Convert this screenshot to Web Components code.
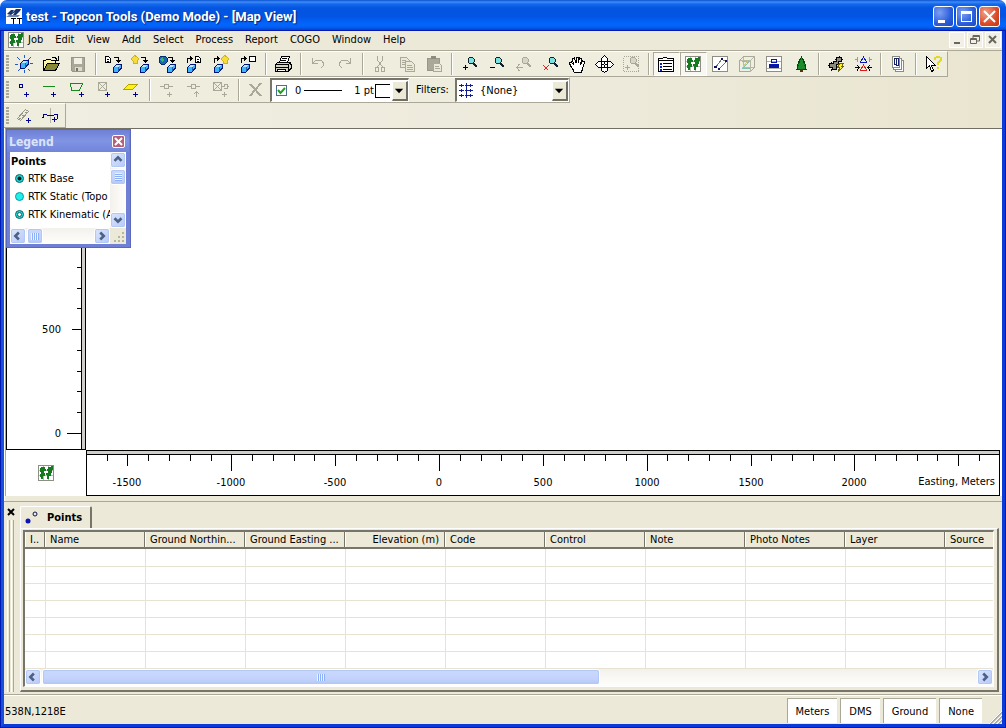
<!DOCTYPE html>
<html lang="en">
<head>
<meta charset="utf-8">
<title>test - Topcon Tools (Demo Mode) - [Map View]</title>
<style>
  html, body { margin: 0; height: 100%; background: #fff; }
  body { font: 11px/14px "DejaVu Sans Condensed", "DejaVu Sans", sans-serif; color: #000; }
</style>
</head>
<body>
<app-window></app-window>

<script>
const define = (name, html, setup) => customElements.define(name, class extends HTMLElement {
  constructor() {
    super();
    this.attachShadow({ mode: 'open' }).innerHTML = html;
  }
  connectedCallback() {
    if (setup && !this.ready) { this.ready = true; setup(this, this.shadowRoot); }
  }
});

/* ---------- icons, 20 x 20 grid ---------- */
const s = (d, c = '#000', w = 1) => `<path d="${d}" fill="none" stroke="${c}" stroke-width="${w}"/>`;
const f = (d, c = '#000', o = 'none') => `<path d="${d}" fill="${c}" stroke="${o}"/>`;
const cube = (x, y) => `<g transform="translate(${x} ${y})">${f('M.5 3.5l3-3h4.500v4l-3 3.500h-4.500z', '#3fb4f8', '#00157a')}${f('M1.500 3l2-2h4l-2 2z', '#b4ebff')}${s('M5.500 3v4', '#1c62c0')}</g>`;
const plus = (x, y, c = '#000090') => s(`M${x - 2} ${y}.5h5M${x}.5 ${y - 2}v5`, c);
const page = (x, y) => f(`M${x}.5 ${y}.5h3l2 2v4h-5z`, '#fff', '#000') + s(`M${x + 2} ${y + 3}.5h2M${x + 2} ${y + 5}.5h2`);
const hookDown = s('M11 3.500h4v3', '#000') + f('M13 6h5l-2.500 3z');
const hookUp = s('M3.500 9v-4.500h4', '#000') + f('M6 2v5l3-2.500z');
const shell = (x, y) => f(`M${x} ${y + 3}l2-2 2-1.500 2 1.500 2 2-2 2v2h-4v-2z`, '#f6dc3a', '#cdb02a');
const mag = (c, glass) => f('M10.500 3.500h3l1.500 1.500v3l-1.500 1.500h-3l-1.500-1.500v-3z', glass, c) + s('M14 9l4 4', c, 2);
const glassOn = mag('#102030', '#7be3df');
const glassOff = mag('#aaa899', '#d8d5c6');
const leaf = f('M5 4h4v2h1v2h-2v2h1v3h-2v3h-2v-2h-1v-3h1v-2h-1v-4h1zM12 4h3v-1h2v4h-1v3h-1v3h-2v3h-2v-4h-1v-2h2v-2h-1z', '#16791f');
const mapBox = f('M2.500 2.500h15v15h-15z', '#fff', '#8e8e86') + s('M3 7.500h14M3 12.500h14M7.500 3v14M12.500 3v14', '#b9bab0') + leaf;
const G = '#aaa899';
const icons = {
  job: s('M10.500 1v3M3 3l3 3M17 3l-3 3M1 10.500h3M16 9.500h3M4 17l2-2M16 17l-2-2M10.500 16v3', '#2158c8') + cube(6, 6),
  open: f('M2.500 16.500v-10h2l1-1h4l1 1h4v3', '#fff7a8', '#000') + f('M2.500 16.500l4-7h12l-4 7z', '#8a8a35', '#000') + s('M11 3.500h3l2 2M17.500 2v4h-4'),
  save: f('M3.500 3.500h13v14h-12l-1-1z', G, '#99968a') + f('M6 4h8v6h-8z', '#f2f0e4') + f('M7 13h7v4h-7z', '#dedbcd') + f('M8 14h2v3h-2z', '#77756a'),
  impFile: page(2, 2) + hookDown + cube(10, 10),
  impShell: shell(1, 2) + hookDown + cube(10, 10),
  impWeb: f('M4 2h4l2 2v4l-2 2h-4l-2-2v-4z', '#1768b3', '#052a72') + f('M3 5l3-2 1 3-2 2z', '#3db65a') + hookDown + cube(10, 10),
  expFile: page(11, 2) + hookUp + cube(3, 10),
  expShell: shell(10, 2) + hookUp + cube(3, 10),
  expBox: f('M11.500 2.500h6v5h-6z', '#fff', '#000') + hookUp + cube(3, 10),
  print: f('M6.500 8.500l2-6h8l-2 6z', '#fff', '#000') + s('M9 4.500h5M8 6.500h5') + f('M2.500 10.500l2-2h12l1.500 2v4l-3 3h-12z', '#d6d3c3', '#000') + s('M3 10.500h12v6M3 13.500h12M15 10.500l3-2') + f('M4.500 15.500h8v2h-8z', '#fff', '#000'),
  undo: s('M4.500 4v5.500h5M5 9l3-3h5l2.500 3v2l-2 3', G),
  redo: s('M15.500 4v5.500h-5M15 9l-3-3h-5l-2.500 3v2l2 3', G),
  cut: s('M7.500 2v4l5 7M12.500 2v4l-5 7', G) + s('M5.500 13.500h3v4h-3zM11.500 13.500h3v4h-3z', G),
  copy: f('M3.500 3.500h6l3 3v7h-9z', '#ece9d8', G) + s('M5 6.500h4M5 8.500h5M5 10.500h5', G) + f('M8.500 7.500h6l3 3v7h-9z', '#ece9d8', G) + s('M10 11.500h5M10 13.500h6M10 15.500h6', G),
  paste: f('M3.500 4.500h12v12h-12z', G, '#99968a') + f('M7 2h5v3h-5z', '#8e8b7d') + f('M9.500 9.500h6l2 2v6h-8z', '#ece9d8', G) + s('M11 12.500h4M11 14.500h5', G),
  zoomIn: glassOn + plus(6, 13, '#000'),
  zoomOut: glassOn + s('M4 13.500h5'),
  zoomBack: glassOff + s('M3 13.500h7M6.500 10l-3 3.500 3 3.500', G),
  zoomX: glassOn + s('M3.500 11.500l5 5M8.500 11.500l-5 5', '#e0242a'),
  hand: f('M6.500 18v-2l-3-4-1-3 2-1 2 3-1-6 2-1 1.500 5v-6h2v6l1.500-5 2 1-1 6 2-4 2 1-2 7-1 3v1z', '#fff', '#000'),
  pan: f('M7.500 4.500l3-3 3 3v3h-6zM7.500 16.500l3 2 3-2v-3h-6zM4.500 7.500l-3 3 3 3h3v-6zM16.500 7.500l3 3-3 3h-3v-6z', '#fff', '#000') + f('M8 8h5v5h-5z', '#fff') + s('M10.500 7v3M10.500 11v3M7 10.500h3M11 10.500h3'),
  zoomSel: `<path d="M2.500 2.500h15v15h-15z" fill="none" stroke="${G}" stroke-dasharray="1 1"/>` + mag(G, '#d8d5c6') + plus(6, 13, G),
  list: f('M2.500 4.500h4l1-1h3l1 1h6v13h-15z', '#fff', '#000') + s('M3 6.500h14M7 9.500h9M7 12.500h9M7 15.500h9') + s('M4 10h2M4 13h2M4 16h2', '#0e1fae', 2),
  map: mapBox,
  network: f('M2.500 2.500h15v15h-15z', '#fff', '#8e8e86') + s('M5.500 13.500l6-8M12.500 5.500l3 2M15.500 8.500l-7 7', '#777') + f('M4 12h3v2h-3zM11 4h2v2h-2zM15 6h2v2h-2zM8 14h2v2h-2z', '#0a125e'),
  cad: f('M2.500 6.500l4-4h11v11l-4 4h-11z', '#f0eee0', '#a9aa96') + s('M2.500 6.500h11v11M13.500 6.500l4-4M6.500 2.500v11M7 13.500h10', '#b8b9a5') + s('M5 7.500h7l-6 7h7', '#84bfb4') + s('M5 14l6-7', '#d4cd72'),
  section: f('M2.500 2.500h15v15h-15z', '#fff', '#8e8e86') + s('M3 7.500h14M3 14.500h14', '#b0b0a8') + f('M5 10h10v4h-10z', '#0717a5') + s('M7.500 5.500h5v3h-5z', '#0717a5'),
  tree: f('M10.500 3l2.500 4h-1l2.500 4h-1l1.500 4h-9l1.500-4h-1l2.500-4h-1z', '#1d8b2c', '#05460f') + f('M9 15h3v3h-3z', '#543512'),
  compute: f('M3.500 9.500h4v-2h3v-4h5v4h-3v3h-2v5h-4v-2h-3z', '#8b8b7e', '#000') + s('M5.500 7.500v2M2 11.500h2M8.500 5.500h2M13.500 2v2M15 5.500h2M5.500 15v2M9 15.500h2') + f('M13.500 9.500h4l-2 3h2l-5 5 1-4h-2z', '#fff22d', '#6d6500'),
  adjust: s('M2 5.500h3M4.500 3v5M19 5.500h-3M16.500 3v5', '#999') + s('M10.500 3l-3 5h6z', '#0817c2') + s('M2 13.500h4M4 11l2 2.500-2 3M19 13.500h-4M17 11l-2 2.500 2 3', '#000') + s('M10.500 11l-3 5h6z', '#e01818'),
  report: f('M7.500 6.500h8v11h-8z', '#fff', '#8b8b80') + f('M5.500 4.500h8v11h-8z', '#fff', '#8b8b80') + f('M4.500 2.500h7v11h-7z', '#fff', '#8b8b80') + s('M8.500 5v5h-2v-6h4v7h-3', '#122068'),
  help: f('M3.500 2.500v12l3-3 2 6 2-1-2-5h4z', '#fff', '#000') + s('M12 6v-2l2-1h2l2 1v2l-3 3v2M14 14h2', '#e2dc18', 2),
  point: s('M5.500 4.500h3v3h-3z', '#000090') + plus(12, 14),
  line: s('M2 6.500h12', '#168a1c') + plus(12, 14),
  area: s('M2.500 3.500h12l-3 7h-8z', '#168a1c') + plus(13, 14),
  raster: s('M3.500 2.500h8v8h-8zM3 2l9 9M12 2l-9 9', G) + plus(12, 14),
  plane: f('M2 9l5-5h9l-5 5z', '#fff21a', '#b1a400') + plus(13, 14),
  pline: s('M3 6.500h4M12 6.500h4M7.500 4.500h4v4h-4z', G) + plus(12, 14, G),
  pup: s('M3 6.500h4M12 6.500h4M7.500 4.500h4v4h-4z', G) + s('M12.500 17v-5M10 14l2.500-2.500 2.500 2.500', G),
  parea: s('M2.500 2.500h8v8h-8zM2 2l9 9M11 2l-9 9M10 6.500h3v-2h3v4h-3M16 6.500h2', G) + plus(13, 14, G),
  del: s('M4 4l11 12M15 3l-11 13', G, 2),
  road: s('M3.500 12.500l8-9 3 2-8 9zM5 12l2 1M8 9l2 1M11 6l2 1', '#99968a') + plus(14, 14),
  xsec: s('M9.500 2v15', '#b5b3a5') + s('M2.500 12v-3.500h3M6 9.500h7M13 8.500h3v4M3 11.500h-2', '#000090') + plus(13, 13),
  filter: s('M1 4.500h14M1 9.500h14M1 14.500h14M3.500 3v3M8.500 2v15M12.500 3v3M3.500 8v3M12.500 8v3M3.500 13v3M12.500 13v3', '#101e90') + s('M6.500 1v17', '#fff')
};
define('ui-icon', `<style>:host{display:block;width:20px;height:20px}svg{display:block;width:100%;height:100%}</style><svg viewBox="0 0 20 20" shape-rendering="crispEdges" aria-hidden="true"></svg>`,
  (el, r) => { r.querySelector('svg').innerHTML = icons[el.getAttribute('name')] || ''; });

/* ---------- title bar ---------- */
define('title-bar', `
<style>
  :host { display: flex; align-items: center; height: 30px; flex: none; padding: 0 6px 0 6px; box-sizing: border-box; gap: 4px;
    border-radius: 7px 7px 0 0;
    background: linear-gradient(#0a4fd0 0, #3f8cf7 2px, #1668ee 4px, #0455e0 8px, #0254e3 16px, #0365fc 24px, #0361f6 27px, #0344c4 30px); }
  h1 { margin: 0; flex: 1; color: #fff; font: bold 13px/18px Roboto, "Open Sans", sans-serif; text-shadow: 1px 1px 1px #07207a; padding-top: 4px; white-space: nowrap; overflow: hidden; }
  .logo { width: 16px; height: 16px; margin-top: 2px; }
  .keys { display: flex; gap: 2px; margin-top: 2px; }
  button { width: 21px; height: 21px; padding: 0; border: 1px solid #fff; border-radius: 3px; background: radial-gradient(circle at 30% 30%, #7ea0f2, #2b5ddb 60%, #1b49c4); }
  button.close { background: radial-gradient(circle at 30% 30%, #f0a088, #dc4a26 60%, #b93a16); }
  svg { display: block; }
</style>
<svg class="logo" viewBox="0 0 16 16" aria-hidden="true"><path fill="#fff" d="M0 0h16v16H0z"/><path fill="#17336f" d="M1 6l4-4h3L6 5l4-4h5l-1 2-4 4H7l2-3-4 3z"/><path fill="#6d82ad" d="M0 9l3-2h11l-2 2z"/><path fill="#000" d="M5 10h5v1H8v5H7v-5H5zM11 10h5v1h-2v5h-1v-5h-2z"/></svg>
<h1><slot></slot></h1>
<div class="keys">
  <button aria-label="Minimize"><svg viewBox="0 0 19 19"><path fill="#fff" d="M4 13h7v3H4z"/></svg></button>
  <button aria-label="Maximize"><svg viewBox="0 0 19 19"><path fill="#fff" fill-rule="evenodd" d="M4 4h11v11H4zM5 7v7h9V7z"/></svg></button>
  <button class="close" aria-label="Close"><svg viewBox="0 0 19 19"><path stroke="#fff" stroke-width="2" d="M4 4l11 11M15 4L4 15"/></svg></button>
</div>`);

/* ---------- menu bar ---------- */
define('menu-bar', `
<style>
  :host { display: flex; align-items: center; height: 20px; flex: none; padding: 0 1px 0 2px; border-bottom: 1px solid #aca899; background: #ece9d8; }
  nav { display: flex; flex: 1; margin-left: -4px; }
  nav button { font: inherit; color: inherit; border: 0; background: none; padding: 1px 6px; white-space: nowrap; }
  .mdi { display: flex; gap: 2px; }
  .mdi button { width: 16px; height: 16px; padding: 0; border: 1px solid #fff; background: #f1efe6; }
  svg { display: block; }
</style>
<ui-icon name="map"></ui-icon><nav></nav>
<div class="mdi">
  <button aria-label="Minimize view"><svg viewBox="0 0 14 14"><path fill="#69675c" d="M4 9h6v2H4z"/></svg></button>
  <button aria-label="Restore view"><svg viewBox="0 0 14 14"><path fill="none" stroke="#69675c" d="M5 5V2.500h6.500V8H9M2.500 5.500h6v5h-6zM3 6.500h6M5 3.500h6"/></svg></button>
  <button aria-label="Close view"><svg viewBox="0 0 14 14"><path stroke="#69675c" stroke-width="2" d="M3 3l7 7M10 3l-7 7"/></svg></button>
</div>`, (el, r) => {
  r.querySelector('nav').innerHTML = el.getAttribute('items').split(',').map(t => `<button>${t}</button>`).join('');
});

/* ---------- toolbars ---------- */
define('tool-bar', `
<style>
  :host { display: flex; align-items: stretch; width: max-content; height: 24px; border: solid; border-width: 1px 1px 1px 0; border-color: #fff #aca899 #aca899; background: #efedde; }
  .grip { width: 3px; margin: 3px 2px 3px 2px; background: repeating-linear-gradient(#aca899 0 2px, transparent 2px 3px); }
</style>
<div class="grip"></div><slot></slot>`);
define('tool-sep', `<style>:host{display:block;width:1px;margin:1px 3px 1px 3px;background:#aca899;border-right:1px solid #fff}</style>`);
define('tool-button', `
<style>
  :host { display: block; }
  button { display: flex; align-items: center; justify-content: flex-start; width: 27px; height: 24px; padding: 0 0 0 2px; border: 1px solid transparent; background: none; }
  :host([pressed]) button { border-color: #aca899 #fff #fff #aca899; background: #f8f7f1; }
</style>
<button></button>`, (el, r) => {
  const b = r.querySelector('button');
  b.innerHTML = `<ui-icon name="${el.getAttribute('icon')}"></ui-icon>`;
  b.setAttribute('aria-label', el.getAttribute('label'));
});
const arrowKey = `<svg viewBox="0 0 14 18"><path d="M2 7h9l-4.500 5z"/></svg>`;
const comboCss = `
  .box { display: flex; align-items: center; height: 24px; box-sizing: border-box; border: solid; border-width: 2px 1px 1px 2px; border-color: #77756a #fff #fff #77756a; background: #fff; outline: 0; }
  .key { flex: none; width: 16px; height: 20px; padding: 0; box-sizing: border-box; border: 1px solid; border-color: #fff #716f64 #716f64 #fff; border-right-width: 2px; border-bottom-width: 2px; background: #ece9d8; }
  .key svg { display: block; width: 100%; height: 100%; }`;
define('style-picker', `
<style>
  :host { display: block; }
  ${comboCss}
  .box { width: 139px; }
  .tick { position: relative; display: block; width: 11px; height: 11px; margin: 0 8px 0 4px; }
  .tick svg { position: absolute; inset: 0; width: 11px; height: 11px; pointer-events: none; }
  input { appearance: none; display: block; width: 11px; height: 11px; margin: 0; border: 1px solid #4d6f8a; box-sizing: border-box; background: #fff; }
  .stroke { width: 38px; height: 1px; background: #000; margin: 0 12px 0 3px; }
  .swatch { width: 14px; height: 12px; border: 1px solid; border-right: 0; margin-left: 1px; }
  label { display: contents; }
  .key { margin-left: auto; }
</style>
<div class="box"><label><span class="tick"><input type="checkbox" checked><svg viewBox="0 0 11 11"><path d="M2 5l2.500 3L9 3" fill="none" stroke="#21a121" stroke-width="2"/></svg></span><span>0</span></label><span class="stroke"></span><span>1 pt</span><span class="swatch"></span><button class="key" aria-label="Choose style">${arrowKey}</button></div>`);
define('filter-picker', `
<style>
  :host { display: flex; align-items: center; }
  ${comboCss}
  label { width: 31px; padding: 0 8px 0 7px; }
  .box { width: 114px; padding-left: 1px; }
  select { appearance: none; flex: 1; min-width: 0; border: 0; padding: 0 0 0 2px; background: none; font: inherit; color: inherit; outline: 0; height: 18px; }
  .key { pointer-events: none; }
</style>
<label for="f">Filters:</label><div class="box"><ui-icon name="filter"></ui-icon><select id="f"><option>{None}</option></select><span class="key">${arrowKey}</span></div>`);

/* ---------- rulers ---------- */
const unit = 20.77;
define('ruler-x', `
<style>
  :host { display: flex; position: relative; overflow: hidden; box-sizing: border-box; border: 1px solid #000; background: linear-gradient(#d0ceca 3px, #000 3px 4px, #fff 4px); }
  svg { flex: none; width: 2400px; height: 100%; font: inherit; }
  span { position: absolute; right: 4px; top: 24px; }
</style><svg aria-label="Easting ruler"></svg><span>Easting, Meters</span>`, (el, r) => {
  let out = '';
  for (let n = -16; n <= 26; n++) {
    const x = Math.round(352 + n * unit), len = n % 10 === 0 ? 16 : n % 5 === 0 ? 11 : 6;
    out += `<rect x="${x}" y="4" width="1" height="${len}"/>`;
    if (n % 5 === 0 && n < 25) out += `<text x="${x}" y="35" text-anchor="middle">${n * 100}</text>`;
  }
  r.querySelector('svg').innerHTML = out;
});
define('ruler-y', `
<style>
  :host { display: flex; align-items: flex-end; overflow: hidden; box-sizing: border-box; border-left: 1px solid #000; border-bottom: 1px solid #000; background: #fff; }
  svg { flex: none; width: 74px; height: 100%; font: inherit; }
  .band { width: 3px; height: 100%; border: solid #000; border-width: 0 1px; background: #d0ceca; }
</style><svg aria-label="Northing ruler"></svg><div class="band"></div>`, (el, r) => {
  const svg = r.querySelector('svg'), paletteHeight = 120;
  const draw = () => {
    const h = el.clientHeight;
    let out = '';
    for (let n = 0; h - 17 - n * unit > paletteHeight; n++) {
      const y = Math.round(h - 16 - n * unit), len = n % 10 === 0 ? 14 : n % 5 === 0 ? 9 : 4;
      out += `<rect x="${74 - len}" y="${y}" width="${len}" height="1"/>`;
      if (n % 5 === 0) out += `<text x="54" y="${y + 4}" text-anchor="end">${n * 100}</text>`;
    }
    svg.innerHTML = out;
  };
  draw();
  new ResizeObserver(draw).observe(el);
});

/* ---------- scroll bars ---------- */
const chev = { left: 'M9 4L5 8l4 4', right: 'M6 4l4 4-4 4', up: 'M4 9l4-4 4 4', down: 'M4 6l4 4 4-4' };
define('scroll-bar', `
<style>
  :host { display: flex; background: linear-gradient(#f3f1ec, #fefefb); box-sizing: border-box; }
  :host([vertical]) { flex-direction: column; background: linear-gradient(90deg, #f3f1ec, #fefefb); }
  button { flex: none; width: 16px; height: 16px; padding: 0; border: 1px solid #fff; border-radius: 3px; outline: 1px solid #b4c8f6; outline-offset: -2px; background: linear-gradient(135deg, #dbe5fe, #b6c9f7); }
  svg { display: block; width: 100%; height: 100%; }
  .track { flex: 1; display: flex; flex-direction: inherit; min-width: 0; min-height: 0; padding: 1px; }
  .thumb { display: flex; align-items: center; justify-content: center; flex: none; box-sizing: border-box; border: 1px solid #fff; border-radius: 3px; outline: 1px solid #b4c8f6; outline-offset: -2px; background: linear-gradient(#c9d8fc, #c3d3fd 60%, #b4c8f4); width: var(--thumb, 16px); height: 16px; margin: -1px 0; }
  .thumb i { width: 8px; height: 7px; background: repeating-linear-gradient(90deg, #eef4fe 0 1px, #8cb0f8 1px 2px); }
  :host([vertical]) .thumb { width: 16px; margin: 0 -1px; }
  :host([vertical]) .thumb i { width: 7px; height: 8px; background: repeating-linear-gradient(#eef4fe 0 1px, #8cb0f8 1px 2px); }
</style>
<button></button><div class="track"><div class="thumb"><i></i></div></div><button></button>`, (el, r) => {
  const names = el.hasAttribute('vertical') ? ['up', 'down'] : ['left', 'right'];
  r.querySelectorAll('button').forEach((b, i) => {
    b.setAttribute('aria-label', 'Scroll ' + names[i]);
    b.innerHTML = `<svg viewBox="0 0 16 16"><path fill="none" stroke="#4d6185" stroke-width="3" d="${chev[names[i]]}"/></svg>`;
  });
});

/* ---------- legend palette ---------- */
define('legend-panel', `
<style>
  :host { display: flex; flex-direction: column; box-sizing: border-box; width: 125px; height: 119px; padding: 0 4px 3px 3px; background: #6f7fd6; border: 1px solid #5a68bd; }
  header { display: flex; align-items: center; justify-content: space-between; height: 22px; margin: 0 -3px; padding: 0 4px 0 2px; flex: none; background: linear-gradient(#6f80d6, #8094e4 50%, #7184da); }
  h2 { margin: 0; padding-top: 2px; font: bold 12px/14px "DejaVu Sans Condensed", sans-serif; color: #dbe3fb; }
  header button { width: 13px; height: 13px; padding: 0; border: 1px solid #fff; border-radius: 2px; background: #b5607a; }
  svg { display: block; width: 100%; height: 100%; }
  .body { flex: 1; min-height: 0; display: grid; grid-template: 1fr 16px / 1fr 16px; background: #fff; }
  .list { white-space: nowrap; min-width: 0; }
  h3 { margin: 2px 0 0 1px; font: bold 11px/16px "DejaVu Sans Condensed", sans-serif; }
  ul { list-style: none; margin: 0; padding: 0; }
  li { display: flex; align-items: center; gap: 3px; height: 18px; padding-left: 4px; }
  li svg { width: 11px; height: 11px; flex: none; margin-bottom: 2px; }
  .corner { background: #ece9d8; }
</style>
<header><h2>Legend</h2><button aria-label="Close legend"><svg viewBox="0 0 11 11"><path stroke="#fff" stroke-width="2" d="M2 2l7 7M9 2L2 9"/></svg></button></header>
<div class="body">
  <div class="list"><h3>Points</h3><ul>
    <li><svg viewBox="0 0 11 11"><circle cx="5.500" cy="5.500" r="4" fill="#26d6d2" stroke="#046a6c"/><circle cx="5.500" cy="5.500" r="2" fill="#001b20"/></svg>RTK Base</li>
    <li><svg viewBox="0 0 11 11"><circle cx="5.500" cy="5.500" r="4" fill="#1df0ee" stroke="#0a9c9c"/></svg>RTK Static (Topo</li>
    <li><svg viewBox="0 0 11 11"><circle cx="5.500" cy="5.500" r="4" fill="#26d6d2" stroke="#046a6c"/><circle cx="5.500" cy="5.500" r="2" fill="#fff" stroke="#046a6c"/></svg>RTK Kinematic (A</li>
  </ul></div>
  <scroll-bar vertical></scroll-bar><scroll-bar></scroll-bar>
  <div class="corner"><svg viewBox="0 0 16 16"><path fill="#b8b4a2" d="M12 4h2v2h-2zM8 8h2v2H8zM12 8h2v2h-2zM4 12h2v2H4zM8 12h2v2H8zM12 12h2v2h-2z"/></svg></div>
</div>`);

/* ---------- map ---------- */
define('map-view', `
<style>
  :host { position: relative; display: grid; grid-template: 1fr 46px / 80px 1fr; flex: 1; min-height: 0; background: #fff; border-top: 1px solid #716f64; border-left: 1px solid #aca899; padding: 0 2px 0 0; margin-left: 1px; }
  .corner { display: grid; place-items: center; }
  legend-panel { position: absolute; left: 0; top: 0; }
</style>
<ruler-y></ruler-y><main></main><div class="corner"><ui-icon name="map"></ui-icon></div><ruler-x></ruler-x>
<legend-panel></legend-panel>`);

/* ---------- docked points table ---------- */
define('points-dock', `
<style>
  :host { display: grid; grid-template-columns: 16px 1fr; flex: none; height: 192px; border-top: 1px solid #aca899; margin-top: 5px; background: #ece9d8; padding-right: 3px; }
  .side { display: flex; flex-direction: column; padding: 6px 0 3px 3px; gap: 4px; }
  .side button { width: 8px; height: 8px; padding: 0; border: 0; background: none; }
  .side svg { display: block; }
  .grip { flex: 1; width: 7px; background: linear-gradient(90deg, #fff 1px, #ece9d8 1px 2px, #aca899 2px 3px, #ece9d8 3px 4px, #fff 4px 5px, #ece9d8 5px 6px, #aca899 6px); }
  .area { min-width: 0; display: flex; flex-direction: column; padding-bottom: 3px; }
  .tab { display: flex; align-items: center; gap: 6px; box-sizing: border-box; width: 72px; height: 22px; margin-top: 4px; padding: 0 4px; border: solid; border-width: 1px 2px 0 1px; border-color: #fff #77756a #fff #fff; border-radius: 2px 2px 0 0; font: inherit; font-weight: bold; color: inherit; background: #ece9d8; }
  .tab svg { width: 16px; height: 16px; flex: none; }
  .panel { flex: 1; min-height: 0; display: flex; flex-direction: column; border: solid; border-width: 1px 2px 2px 1px; border-color: #fff #77756a #77756a #fff; padding: 1px 3px 3px 2px; }
  .frame { flex: 1; min-height: 0; display: flex; flex-direction: column; overflow: hidden; border: solid; border-width: 2px 1px 1px 2px; border-color: #77756a #fff #fff #77756a; background: #fff; }
  .clip { flex: 1; min-height: 0; overflow: hidden; }
  table { border-collapse: separate; border-spacing: 0; table-layout: fixed; width: 1020px; }
  th { box-sizing: border-box; height: 17px; padding: 0 5px; font-weight: normal; text-align: left; line-height: 14px; white-space: nowrap; overflow: hidden; text-overflow: ellipsis; background: #ece9d8; border: solid; border-width: 0 1px 2px 0; border-color: #77756a; box-shadow: inset 1px 0 #fff; }
  th:first-child { padding-right: 0; text-overflow: clip; }
  th.num { text-align: right; }
  td { box-sizing: border-box; height: 17px; padding: 0; border: solid #e6e3d3; border-width: 0 0 1px 1px; }
  tbody tr:first-child td { height: 18px; }
  td:first-child { border-left: 0; }
  scroll-bar { height: 17px; --thumb: 558px; }
</style>
<div class="side"><button aria-label="Close panel"><svg viewBox="0 0 8 8"><path stroke="#000" stroke-width="2" d="M1 1l6 6M7 1L1 7"/></svg></button><div class="grip"></div></div>
<div class="area">
  <button class="tab"><svg viewBox="0 0 16 16"><circle cx="3" cy="11" r="2.500" fill="#0a14b4"/><circle cx="10" cy="4" r="2" fill="none" stroke="#0a1450"/></svg>Points</button>
  <div class="panel"><div class="frame">
    <div class="clip"><table><colgroup><col style="width:20px"></colgroup><thead><tr></tr></thead><tbody></tbody></table></div>
    <scroll-bar></scroll-bar>
  </div></div>
</div>`, (el, r) => {
  const heads = ['I..', 'Name', 'Ground Northin...', 'Ground Easting ...', 'Elevation (m)', 'Code', 'Control', 'Note', 'Photo Notes', 'Layer', 'Source'];
  r.querySelector('tr').innerHTML = heads.map(h => `<th scope="col"${h === 'Elevation (m)' ? ' class="num"' : ''}>${h}</th>`).join('');
  r.querySelector('tbody').innerHTML = ('<tr>' + '<td></td>'.repeat(heads.length) + '</tr>').repeat(7);
});

/* ---------- status bar ---------- */
define('status-bar', `
<style>
  :host { display: flex; align-items: stretch; flex: none; height: 29px; border-top: 1px solid #aca899; box-shadow: inset 0 1px #fff; background: #ece9d8; }
  .pos { flex: 1; align-self: center; padding: 4px 0 0 1px; }
  .pane { box-sizing: border-box; margin: 3px 3px 1px 0; padding: 6px 8px 0 8px; border: solid #aca899; border-width: 1px 0 0 1px; background: #fff; }
  svg { align-self: flex-end; width: 14px; height: 14px; margin-left: 3px; }
</style>
<div class="pos">538N,1218E</div><div class="pane">Meters</div><div class="pane">DMS</div><div class="pane">Ground</div><div class="pane">None</div>
<svg viewBox="0 0 14 14" aria-hidden="true"><path d="M2 14L14 2M6 14l8-8M10 14l4-4" stroke="#aca899" stroke-width="2"/><path d="M1 14L14 1M5 14l9-9M9 14l5-5" stroke="#fff"/></svg>`);

/* ---------- window ---------- */
const btns = list => list.split(' ').map(n => n === '|' ? '<tool-sep></tool-sep>' : `<tool-button icon="${n.replace('*', '')}" label="${n.replace('*', '')}"${n.includes('*') ? ' pressed' : ''}></tool-button>`).join('');
define('app-window', `
<style>
  :host { display: flex; flex-direction: column; height: 100vh; overflow: hidden; }
  .frame { flex: 1; min-height: 0; display: flex; flex-direction: column; border: 4px solid #0a3bd6; border-top: 0; background: #ece9d8; border-left-color: #1650dd; box-shadow: inset 1px 0 #fff; outline: 1px solid #0019b0; outline-offset: -1px; }
  .bars { display: grid; grid-template-rows: 26px 26px 25px; flex: none; overflow: hidden; background: linear-gradient(90deg, #f0eee3 0%, #edeadb 60%, #e9e5cf 100%); }
  tool-bar:last-child { height: 23px; }
</style>
<title-bar>test - Topcon Tools (Demo Mode) - [Map View]</title-bar>
<div class="frame">
  <menu-bar items="Job,Edit,View,Add,Select,Process,Report,COGO,Window,Help"></menu-bar>
  <div class="bars">
    <tool-bar>${btns('job open save | impFile impShell impWeb expFile expShell expBox | print | undo redo | cut copy paste | zoomIn zoomOut zoomBack zoomX hand pan zoomSel | *list *map network cad section tree | compute adjust | report | help')}</tool-bar>
    <tool-bar>${btns('point line area raster plane | pline pup parea | del')}<style-picker></style-picker><filter-picker></filter-picker></tool-bar>
    <tool-bar>${btns('road xsec')}</tool-bar>
  </div>
  <map-view></map-view>
  <points-dock></points-dock>
  <status-bar></status-bar>
</div>`);
</script>
</body>
</html>
